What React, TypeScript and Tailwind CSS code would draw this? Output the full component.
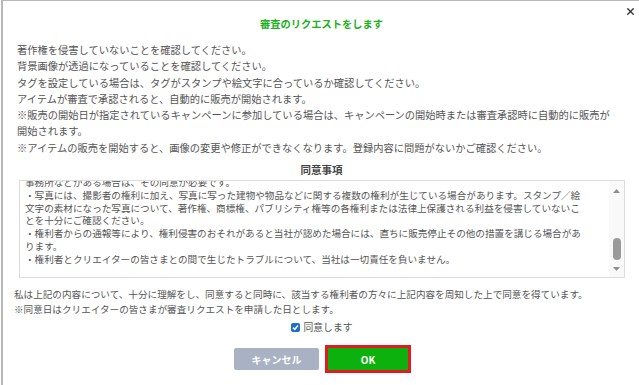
import { X } from 'lucide-react'

const NOTES = [
  '著作権を侵害していないことを確認してください。',
  '背景画像が透過になっていることを確認してください。',
  'タグを設定している場合は、タグがスタンプや絵文字に合っているか確認してください。',
  'アイテムが審査で承認されると、自動的に販売が開始されます。',
]

const TERMS = [
  '事務所などがある場合は、その同意が必要です。',
  '・写真には、撮影者の権利に加え、写真に写った建物や物品などに関する複数の権利が生じている場合があります。スタンプ／絵',
  '文字の素材になった写真について、著作権、商標権、パブリシティ権等の各権利または法律上保護される利益を侵害していないこ',
  'とを十分にご確認ください。',
  '・権利者からの通報等により、権利侵害のおそれがあると当社が認めた場合には、直ちに販売停止その他の措置を講じる場合があ',
  'ります。',
  '・権利者とクリエイターの皆さまとの間で生じたトラブルについて、当社は一切責任を負いません。',
]

export default function App() {
  return (
    <div
      className="w-[639px] h-[385px] bg-white overflow-hidden"
      style={{ fontFamily: '"Noto Sans CJK JP", "Noto Sans", sans-serif' }}
    >
      <div className="relative ml-px h-full border-l-2 border-t border-[#b8b8b8] pl-[14px] pr-[13px]">
        {/* Close */}
        <button className="absolute top-[4px] right-[3px] w-[12px] h-[12px] flex items-center justify-center text-[#333]">
          <X className="w-[11px] h-[11px]" strokeWidth={3} />
        </button>

        {/* Title */}
        <h1 className="pt-[15px] text-center text-[10.25px] leading-[16px] font-bold text-[#1cb01c]">
          審査のリクエストをします
        </h1>

        {/* Notes */}
        <div className="mt-[10px] text-[10.25px] leading-[16.3px] text-[#555] whitespace-nowrap">
          {NOTES.map((n) => (
            <p key={n}>{n}</p>
          ))}
          <p>
            ※販売の開始日が指定されているキャンペーンに参加している場合は、キャンペーンの開始時または審査承認時に自動的に販売が
            <br />
            開始されます。
          </p>
          <p>※アイテムの販売を開始すると、画像の変更や修正ができなくなります。登録内容に問題がないかご確認ください。</p>
        </div>

        {/* Terms */}
        <h2 className="mt-[6px] text-center text-[10.5px] leading-[16px] font-bold text-[#444]">同意事項</h2>
        <div className="mt-[2px] ml-[2px] mr-px h-[98px] border border-[#dcdcdc] flex overflow-hidden">
          <div className="flex-1 overflow-hidden pl-[5px]">
            <div className="-mt-[5px] text-[9.6px] leading-[12.8px] text-[#555] whitespace-nowrap">
              {TERMS.map((t) => (
                <p key={t}>{t}</p>
              ))}
            </div>
          </div>
          <div className="w-[15px] bg-[#f9f9f9] flex flex-col items-center pt-[8px] pb-[6px]">
            <svg width="7" height="4" viewBox="0 0 7 4">
              <path d="M3.5 0 L7 4 L0 4 Z" fill="#8e8e8e" />
            </svg>
            <div className="flex-1" />
            <div className="w-[8px] h-[22px] rounded-full bg-[#9a9a9a] mb-[7px]" />
            <svg width="7" height="4" viewBox="0 0 7 4">
              <path d="M0 0 L7 0 L3.5 4 Z" fill="#8e8e8e" />
            </svg>
          </div>
        </div>

        {/* Agreement */}
        <div className="mt-[9px] -ml-[3px] text-[9.6px] leading-[14.5px] text-[#555] whitespace-nowrap">
          <p>私は上記の内容について、十分に理解をし、同意すると同時に、該当する権利者の方々に上記内容を周知した上で同意を得ています。</p>
          <p>※同意日はクリエイターの皆さまが審査リクエストを申請した日とします。</p>
        </div>

        <label className="mt-[3px] h-[16px] flex items-center justify-center gap-[4px] text-[9.8px] text-[#555]">
          <span className="w-[9px] h-[9px] rounded-[2px] bg-[#1b6ed0] flex items-center justify-center">
            <svg width="7" height="7" viewBox="0 0 7 7">
              <path d="M1 3.6 L2.8 5.3 L6 1.6" stroke="white" strokeWidth="1.5" fill="none" />
            </svg>
          </span>
          同意します
        </label>

        {/* Buttons */}
        <div className="mt-[10px] flex items-center justify-center gap-[6px] pl-[2px]">
          <button className="w-[85px] h-[22px] rounded-[2px] bg-[#a8b2c2] text-white text-[10px] font-bold">
            キャンセル
          </button>
          <button className="w-[86px] h-[28px] border-[3px] border-[#e11b22] bg-[#0db10d] text-white text-[10px] font-bold">
            OK
          </button>
        </div>
      </div>
    </div>
  )
}
